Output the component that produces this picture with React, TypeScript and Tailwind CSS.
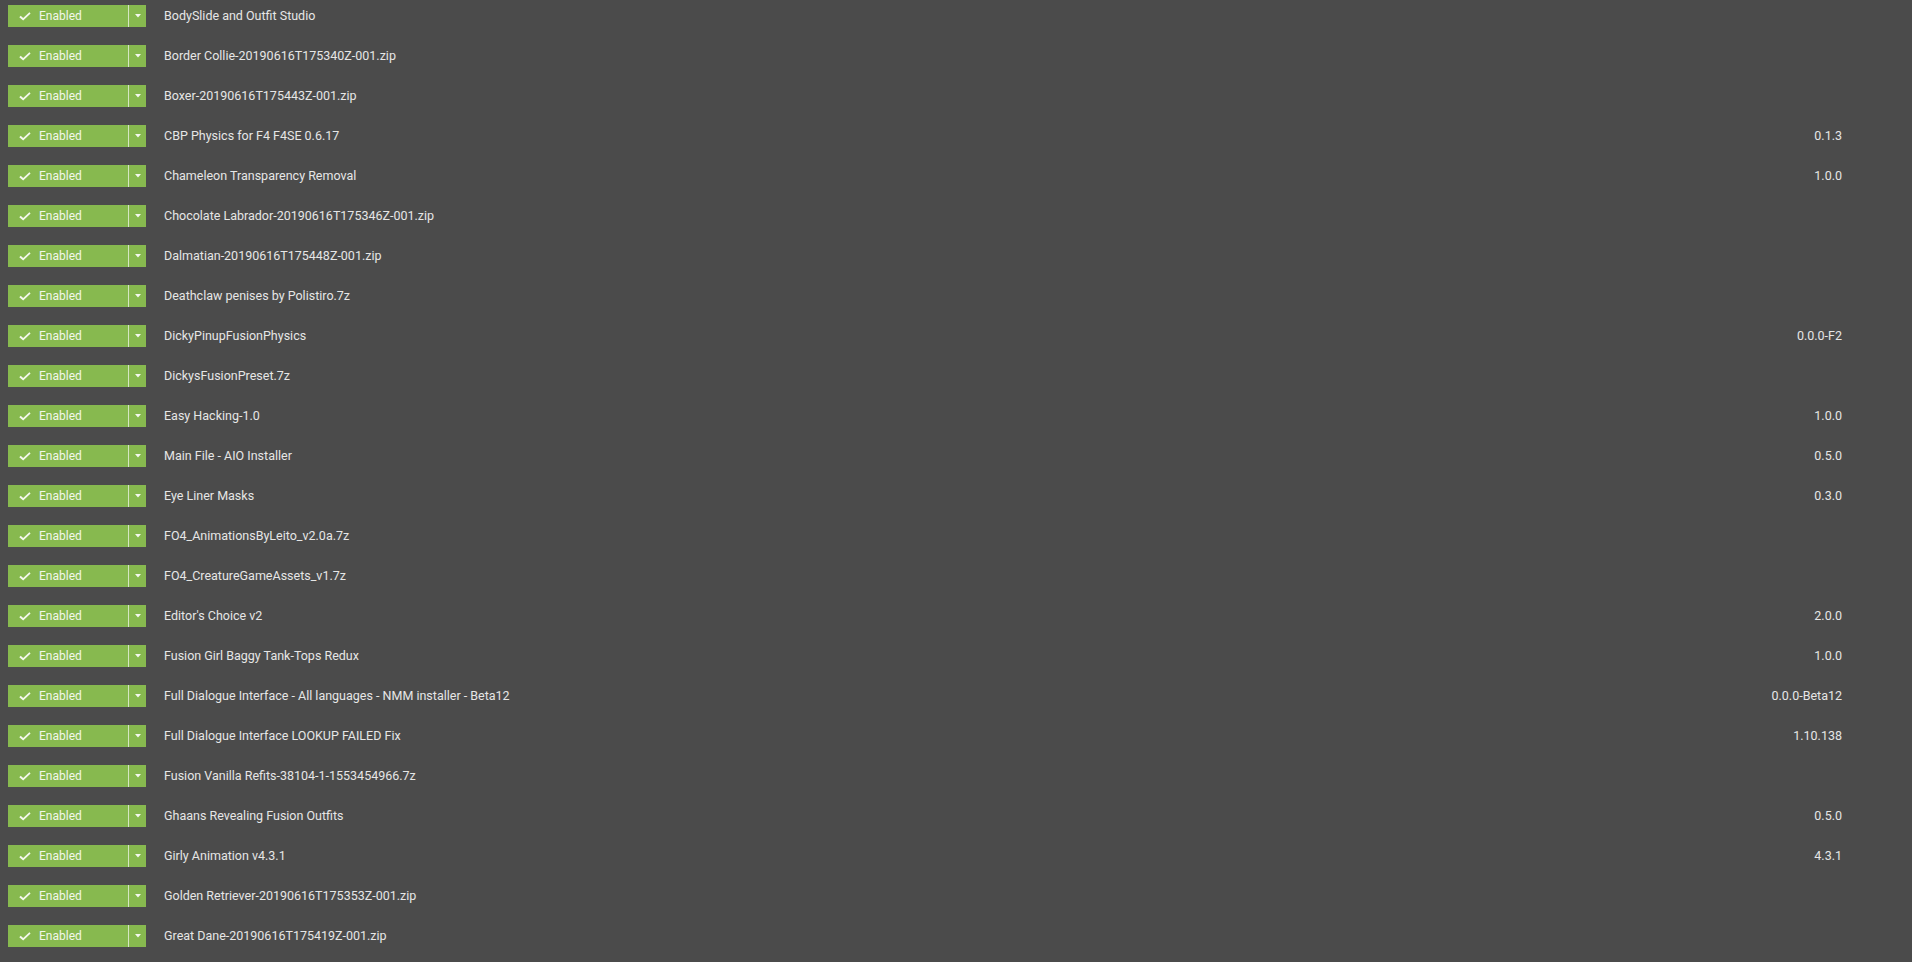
const mods: [string, string][] = [
  ["BodySlide and Outfit Studio", ""],
  ["Border Collie-20190616T175340Z-001.zip", ""],
  ["Boxer-20190616T175443Z-001.zip", ""],
  ["CBP Physics for F4 F4SE 0.6.17", "0.1.3"],
  ["Chameleon Transparency Removal", "1.0.0"],
  ["Chocolate Labrador-20190616T175346Z-001.zip", ""],
  ["Dalmatian-20190616T175448Z-001.zip", ""],
  ["Deathclaw penises by Polistiro.7z", ""],
  ["DickyPinupFusionPhysics", "0.0.0-F2"],
  ["DickysFusionPreset.7z", ""],
  ["Easy Hacking-1.0", "1.0.0"],
  ["Main File - AIO Installer", "0.5.0"],
  ["Eye Liner Masks", "0.3.0"],
  ["FO4_AnimationsByLeito_v2.0a.7z", ""],
  ["FO4_CreatureGameAssets_v1.7z", ""],
  ["Editor's Choice v2", "2.0.0"],
  ["Fusion Girl Baggy Tank-Tops Redux", "1.0.0"],
  ["Full Dialogue Interface - All languages - NMM installer - Beta12", "0.0.0-Beta12"],
  ["Full Dialogue Interface LOOKUP FAILED Fix", "1.10.138"],
  ["Fusion Vanilla Refits-38104-1-1553454966.7z", ""],
  ["Ghaans Revealing Fusion Outfits", "0.5.0"],
  ["Girly Animation v4.3.1", "4.3.1"],
  ["Golden Retriever-20190616T175353Z-001.zip", ""],
  ["Great Dane-20190616T175419Z-001.zip", ""],
]

function EnabledButton() {
  return (
    <div className="flex h-[22px] w-[138px] bg-[#87b94f] text-[#f2f7ea]">
      <div className="flex w-[120px] items-center pl-[11px]">
        <svg width="12" height="9" viewBox="0 0 12 9" className="mr-[8px]">
          <path d="M0.3 5.2 L1.7 3.8 L4.2 6.0 L10.4 0.3 L11.6 1.4 L4.2 8.6 Z" fill="#f4f8ee" />
        </svg>
        <span className="text-[12px] leading-none">Enabled</span>
      </div>
      <div className="w-px bg-[#d5e6c2]" />
      <div className="flex flex-1 items-center justify-center">
        <svg width="6" height="4" viewBox="0 0 6 4">
          <path d="M0 0 H6 L3 3.5 Z" fill="#f4f8ee" />
        </svg>
      </div>
    </div>
  )
}

export default function App() {
  return (
    <div className="h-[962px] overflow-hidden bg-[#4b4b4b] pt-[5px] pl-[8px] pr-[70px] font-['Roboto','Liberation_Sans',sans-serif]">
      {mods.map(([name, version]) => (
        <div key={name} className="flex h-[40px] items-start">
          <EnabledButton />
          <div className="flex h-[22px] flex-1 items-center justify-between pl-[18px] text-[12.5px] text-[#e6e6e6]">
            <span>{name}</span>
            <span>{version}</span>
          </div>
        </div>
      ))}
    </div>
  )
}
